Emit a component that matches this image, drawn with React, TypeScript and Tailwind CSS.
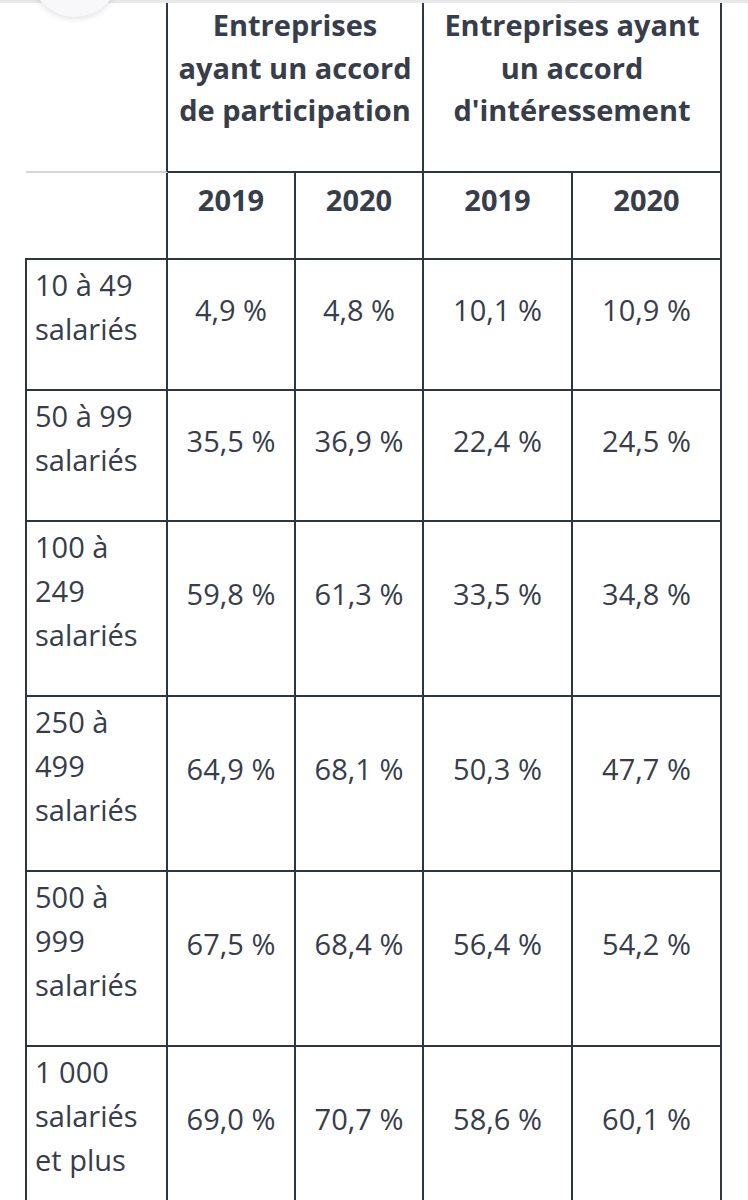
import React from "react";

const rows: { label: string[]; values: string[] }[] = [
  { label: ["10 à 49", "salariés"], values: ["4,9 %", "4,8 %", "10,1 %", "10,9 %"] },
  { label: ["50 à 99", "salariés"], values: ["35,5 %", "36,9 %", "22,4 %", "24,5 %"] },
  { label: ["100 à", "249", "salariés"], values: ["59,8 %", "61,3 %", "33,5 %", "34,8 %"] },
  { label: ["250 à", "499", "salariés"], values: ["64,9 %", "68,1 %", "50,3 %", "47,7 %"] },
  { label: ["500 à", "999", "salariés"], values: ["67,5 %", "68,4 %", "56,4 %", "54,2 %"] },
  { label: ["1 000", "salariés", "et plus"], values: ["69,0 %", "70,7 %", "58,6 %", "60,1 %"] },
];

export default function App() {
  return (
    <div
      className="relative w-[748px] h-[1200px] overflow-hidden bg-white text-[#373d4a]"
      style={{ fontFamily: '"Open Sans", "Liberation Sans", sans-serif' }}
    >
      <div className="ml-[25px] grid grid-cols-[143px_128px_128px_149px_149px]">
        {/* header row 1 */}
        <div className="h-[173px] border-r-2 border-b-2 border-r-[#2f3542] border-b-[#d4d4d8] ml-[1px]" />
        <div className="col-span-2 h-[173px] border-r-2 border-b-2 border-[#2f3542] pt-[4px] text-center text-[29px] font-bold leading-[42.5px] whitespace-nowrap">
          Entreprises
          <br />
          ayant un accord
          <br />
          de participation
        </div>
        <div className="col-span-2 h-[173px] border-r-2 border-b-2 border-[#2f3542] pt-[4px] text-center text-[29px] font-bold leading-[42.5px] whitespace-nowrap">
          Entreprises ayant
          <br />
          un accord
          <br />
          d'intéressement
        </div>

        {/* header row 2 */}
        <div className="border-r-2 border-b-2 border-[#2f3542]" />
        {["2019", "2020", "2019", "2020"].map((y, i) => (
          <div
            key={i}
            className="flex justify-center border-r-2 border-b-2 border-[#2f3542] pt-[5px] pb-[36px] text-[29px] font-bold leading-[44px]"
          >
            {y}
          </div>
        ))}

        {rows.map((r, ri) => (
          <React.Fragment key={ri}>
            <div className="border-l-2 border-r-2 border-b-2 border-[#2f3542] pl-[8px] pt-[3px] pb-[38px] text-[29px] leading-[44px]">
              {r.label.map((l, li) => (
                <div key={li} className="whitespace-nowrap">
                  {l}
                </div>
              ))}
            </div>
            {r.values.map((v, vi) => (
              <div
                key={vi}
                className="flex items-center justify-center border-r-2 border-b-2 border-[#2f3542] pt-[6px] pb-[35px] text-[29px] leading-[44px] whitespace-nowrap"
              >
                {v}
              </div>
            ))}
          </React.Fragment>
        ))}
      </div>

      {/* overlay: top bar edge and floating button */}
      <div className="absolute left-0 top-0 h-[3px] w-full bg-[#e8e8eb]" />
      <div className="absolute left-[30px] top-[-73px] h-[90px] w-[90px] rounded-full bg-[#f8f8fa] shadow-[0_2px_6px_rgba(0,0,0,0.12)]" />
    </div>
  );
}
